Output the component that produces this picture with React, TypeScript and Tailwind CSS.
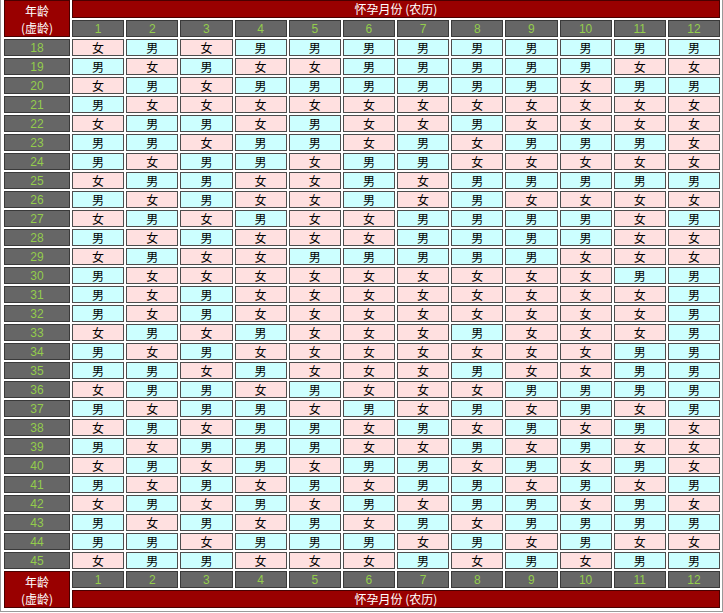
import React from "react"

// 清宫图 rows: age 18..45, months 1..12 (M = 男, F = 女)
const rows: string[] = [
  "FMFMMMMMMMMM",
  "MFMFFMMMMMFF",
  "FMFMMMMMMFMM",
  "MFFFFFFFFFFF",
  "FMMFMFFMFFFF",
  "MMFMMFMFMMMF",
  "MFMMFMMFFFFF",
  "FMMFFMFMMMMM",
  "MFMFFMFMFFFF",
  "FMFMFFMMMMFM",
  "MFMFFFMMMMFF",
  "FMFFMMMMMFFF",
  "MFFFFFFFFFMM",
  "MFMFFFFFFFFM",
  "MFMFFFFFFFFM",
  "FMFMFFFMFFFM",
  "MFMFFFFFFFMM",
  "MMFMFFFMFFMM",
  "FMMFMFFFMMMM",
  "MFMMFMFMFMFM",
  "FMFMMFMFMFMF",
  "MFMMMFFMFMFF",
  "FMFMFMMFMFMF",
  "MFMFMFMMFMFM",
  "FMFMFMFMMFMF",
  "MFMFMFMFMMMM",
  "MMFMMMFMFMFF",
  "FMMFFFMFMFMM",
]

const months = Array.from({ length: 12 }, (_, i) => i + 1)

const font = { fontFamily: '"Noto Sans CJK SC", "Noto Sans", sans-serif' }

function AgeHeader() {
  return (
    <div className="row-span-2 bg-[#990000] border border-[#4a0000] flex flex-col items-center justify-center text-white text-[12px] leading-[17px]">
      <span>年龄</span>
      <span>(虚龄)</span>
    </div>
  )
}

function MonthCells() {
  return (
    <>
      {months.map((m) => (
        <div
          key={m}
          className="bg-[#666666] border border-[#3a3a3a] flex items-center justify-center text-[#93cc4c] text-[12px] font-['Liberation_Sans',sans-serif]"
        >
          {m}
        </div>
      ))}
    </>
  )
}

function TitleBar() {
  return (
    <div className="col-span-12 bg-[#990000] border border-[#4a0000] flex items-center justify-center text-white text-[12px]">
      怀孕月份 (农历)
    </div>
  )
}

export default function App() {
  return (
    <div className="w-[723px] h-[613px] bg-white" style={font}>
      <div className="border-l border-r border-b border-[#9a9a9a] pl-[3px] pr-[2px] pb-[3px]">
        <div className="grid grid-cols-[66px_repeat(12,1fr)] grid-rows-[18px_17px_repeat(28,17px)_17px_18px] gap-[2px]">
          <AgeHeader />
          <TitleBar />
          <MonthCells />

          {rows.map((r, i) => (
            <React.Fragment key={i}>
              <div className="bg-[#666666] border border-[#3a3a3a] flex items-center justify-center text-[#93cc4c] text-[12px] font-['Liberation_Sans',sans-serif]">
                {18 + i}
              </div>
              {r.split("").map((c, j) => (
                <div
                  key={j}
                  className={
                    c === "M"
                      ? "bg-[#ccffff] border border-[#4d4d4d] flex items-center justify-center text-black text-[12px]"
                      : "bg-[#ffe0e0] border border-[#4d4d4d] flex items-center justify-center text-black text-[12px]"
                  }
                >
                  {c === "M" ? "男" : "女"}
                </div>
              ))}
            </React.Fragment>
          ))}

          <AgeHeader />
          <MonthCells />
          <TitleBar />
        </div>
      </div>
    </div>
  )
}
